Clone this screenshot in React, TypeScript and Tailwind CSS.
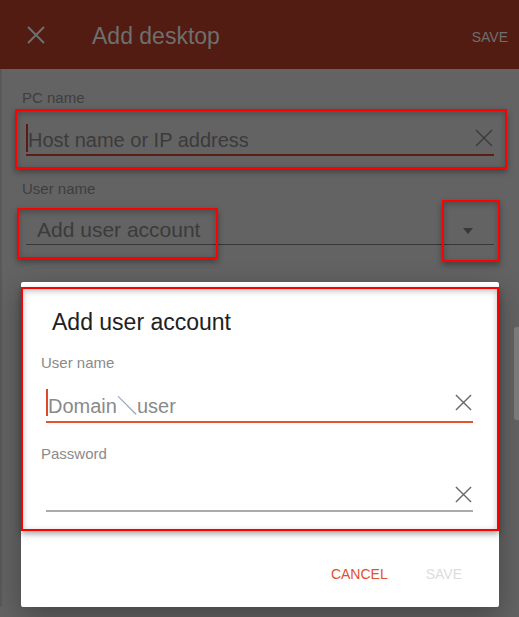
import React from "react";

const font = { fontFamily: '"Liberation Sans", Arial, sans-serif' };

function Cross({ className, stroke = 1.6 }: { className: string; stroke?: number }) {
  return (
    <svg className={className} viewBox="0 0 18 18" fill="none" stroke="currentColor" strokeWidth={stroke}>
      <path d="M1 1L17 17M17 1L1 17" />
    </svg>
  );
}

function Mark({ className }: { className: string }) {
  return (
    <div
      className={`pointer-events-none absolute border-2 border-[#ff0000] shadow-[0_3px_6px_rgba(0,0,0,0.35),inset_0_2px_6px_rgba(0,0,0,0.25)] ${className}`}
    />
  );
}

export default function App() {
  return (
    <div className="relative h-[617px] w-[519px] overflow-hidden bg-[#636363]" style={font}>
      {/* app bar */}
      <header className="flex h-[69px] items-start bg-[#521c12] text-[#6f6f6f]">
        <Cross className="ml-[27px] mt-[26px] h-[18px] w-[18px]" stroke={2} />
        <h1 className="ml-[47px] mt-[22px] text-[23px] leading-[28px]">Add desktop</h1>
        <span className="ml-auto mr-[11px] mt-[29px] text-[14px] leading-[16px]">SAVE</span>
      </header>

      <main className="border-l-2 border-[#595959] pl-[20px] pr-[25px] pt-[20px]">
        <p className="text-[15px] leading-[18px] text-[#3e3e3e]">PC name</p>
        <div className="ml-[4px] mt-[21px] flex h-[28px] items-start border-b-2 border-[#5c1d12]">
          <span className="-mt-[4px] h-[28px] w-[2px] bg-[#5a1c12]" />
          <span className="text-[20px] leading-[24px] text-[#3b3b3b]">Host name or IP address</span>
          <Cross className="ml-auto mr-[1px] mt-[1px] h-[18px] w-[18px] text-[#3a3a3a]" stroke={1.4} />
        </div>

        <p className="mt-[24px] text-[15px] leading-[18px] text-[#3e3e3e]">User name</p>
        <div className="ml-[4px] mt-[19px] flex h-[28px] items-start border-b border-[#383838]">
          <span className="ml-[11px] text-[21px] leading-[25px] text-[#3b3b3b]">Add user account</span>
          <svg className="ml-auto mr-[21px] mt-[11px] h-[6px] w-[10px] text-[#383838]" viewBox="0 0 10 6">
            <path d="M0 0H10L5 6Z" fill="currentColor" />
          </svg>
        </div>

        {/* dialog */}
        <section className="-ml-[1px] mr-[-5px] mt-[37px] h-[325px] rounded-[2px] bg-white pl-[20px] pr-[26px] pt-[26px] shadow-[0_10px_30px_rgba(0,0,0,0.3)]">
          <h2 className="ml-[11px] text-[23px] leading-[28px] text-[#212121]">Add user account</h2>
          <p className="mt-[18px] text-[15px] leading-[18px] text-[#8a8a8a]">User name</p>
          <div className="ml-[5px] mt-[22px] flex h-[29px] items-start border-b-2 border-[#e4532f]">
            <span className="-mt-[5px] h-[27px] w-[2px] bg-[#e0482a]" />
            <span
              className="text-[20px] leading-[24px] text-[#8a8a8a]"
              style={{ fontFamily: '"Liberation Sans", "Noto Sans CJK JP", sans-serif' }}
            >
              Domain＼user
            </span>
            <Cross className="ml-auto mr-[1px] mt-0 h-[17px] w-[17px] text-[#6a6a6a]" stroke={1.5} />
          </div>
          <p className="mt-[22px] text-[15px] leading-[18px] text-[#8a8a8a]">Password</p>
          <div className="ml-[5px] mt-[20px] flex h-[29px] items-start border-b-2 border-[#ababab]">
            <Cross className="ml-auto mr-[1px] mt-[3px] h-[17px] w-[17px] text-[#6a6a6a]" stroke={1.5} />
          </div>
          <div className="mr-[11px] mt-[54px] flex justify-end gap-[38px] text-[14px] leading-[16px]">
            <span className="text-[#e0502e]">CANCEL</span>
            <span className="text-[#dcdcdc]">SAVE</span>
          </div>
        </section>
      </main>

      {/* scroll thumb */}
      <div className="absolute right-0 top-[327px] h-[93px] w-[5px] rounded-l-[3px] bg-[#7a7a7a]" />

      {/* annotation boxes */}
      <Mark className="left-[15px] top-[109px] h-[60px] w-[492px]" />
      <Mark className="left-[17px] top-[208px] h-[51px] w-[201px]" />
      <Mark className="left-[442px] top-[200px] h-[62px] w-[58px]" />
      <Mark className="left-[21px] top-[287px] h-[244px] w-[478px]" />
    </div>
  );
}
